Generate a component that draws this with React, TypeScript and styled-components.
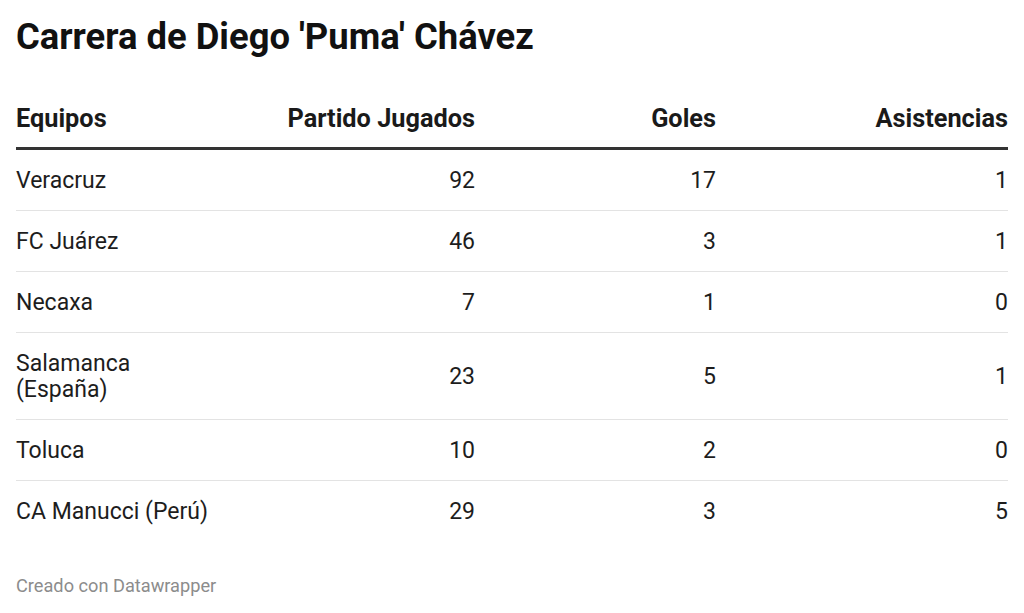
import React from 'react';
import styled, { createGlobalStyle } from 'styled-components';

const GlobalStyle = createGlobalStyle`
  html, body {
    margin: 0;
    padding: 0;
    background: #ffffff;
  }
  body {
    font-family: Roboto, "Liberation Sans", sans-serif;
    -webkit-font-smoothing: antialiased;
  }
`;

const Page = styled.div`
  width: 1024px;
  height: 613px;
  box-sizing: border-box;
  padding: 16px 16px 0 16px;
  display: flex;
  flex-direction: column;
  overflow: hidden;
`;

const Title = styled.h1`
  margin: 0;
  font-size: 36.4px;
  font-weight: 700;
  line-height: 42px;
  color: #111111;
  white-space: nowrap;
`;

const Table = styled.div`
  margin-top: 47px;
  display: grid;
  grid-template-columns: 200px 259px 241px 292px;
`;

const HeadCell = styled.div<{ $align: 'left' | 'right' }>`
  font-size: 25.3px;
  font-weight: 700;
  line-height: 28px;
  color: #1a1a1a;
  text-align: ${p => p.$align};
  white-space: nowrap;
  padding-bottom: 14px;
  border-bottom: 3px solid #333333;
`;

const Cell = styled.div<{ $align: 'left' | 'right'; $last: boolean }>`
  font-size: 23px;
  line-height: 26px;
  color: #1d1d1d;
  padding: 18px 0 16px;
  border-bottom: 1px solid ${p => (p.$last ? 'transparent' : '#e3e3e3')};
  display: flex;
  align-items: center;
  justify-content: ${p => (p.$align === 'right' ? 'flex-end' : 'flex-start')};
  text-align: ${p => p.$align};
`;

const TeamName = styled.span`
  white-space: pre-line;
`;

const Footer = styled.div`
  margin-top: 33px;
  font-size: 18.2px;
  line-height: 22px;
  color: #8c8c8c;
`;

interface Row {
  team: string;
  played: number;
  goals: number;
  assists: number;
}

const rows: Row[] = [
  { team: 'Veracruz', played: 92, goals: 17, assists: 1 },
  { team: 'FC Juárez', played: 46, goals: 3, assists: 1 },
  { team: 'Necaxa', played: 7, goals: 1, assists: 0 },
  { team: 'Salamanca\n(España)', played: 23, goals: 5, assists: 1 },
  { team: 'Toluca', played: 10, goals: 2, assists: 0 },
  { team: 'CA Manucci (Perú)', played: 29, goals: 3, assists: 5 },
];

const App: React.FC = () => {
  return (
    <>
      <GlobalStyle />
      <Page>
        <Title>Carrera de Diego 'Puma' Chávez</Title>
        <Table>
          <HeadCell $align="left">Equipos</HeadCell>
          <HeadCell $align="right">Partido Jugados</HeadCell>
          <HeadCell $align="right">Goles</HeadCell>
          <HeadCell $align="right">Asistencias</HeadCell>
          {rows.map((r, i) => {
            const last = i === rows.length - 1;
            return (
              <React.Fragment key={r.team}>
                <Cell $align="left" $last={last}>
                  <TeamName>{r.team}</TeamName>
                </Cell>
                <Cell $align="right" $last={last}>{r.played}</Cell>
                <Cell $align="right" $last={last}>{r.goals}</Cell>
                <Cell $align="right" $last={last}>{r.assists}</Cell>
              </React.Fragment>
            );
          })}
        </Table>
        <Footer>Creado con Datawrapper</Footer>
      </Page>
    </>
  );
};

export default App;
